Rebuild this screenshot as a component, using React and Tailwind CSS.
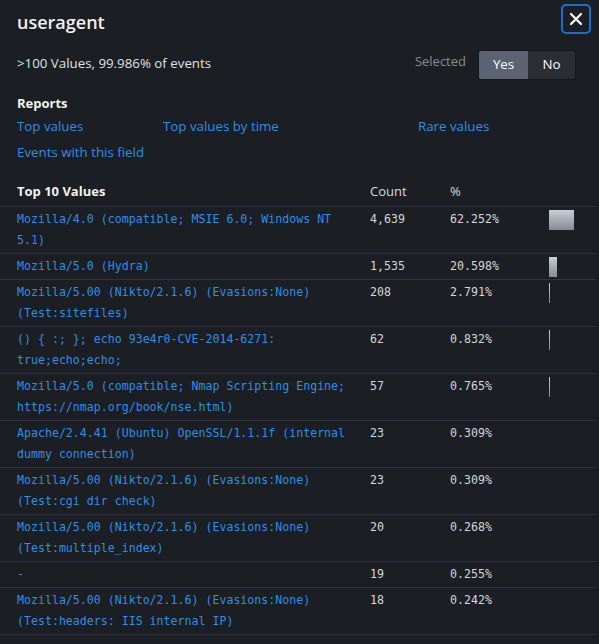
const rows = [
  { value: "Mozilla/4.0 (compatible; MSIE 6.0; Windows NT 5.1)", count: "4,639", pct: 62.252 },
  { value: "Mozilla/5.0 (Hydra)", count: "1,535", pct: 20.598 },
  { value: "Mozilla/5.00 (Nikto/2.1.6) (Evasions:None) (Test:sitefiles)", count: "208", pct: 2.791 },
  { value: "() { :; }; echo 93e4r0-CVE-2014-6271: true;echo;echo;", count: "62", pct: 0.832 },
  { value: "Mozilla/5.0 (compatible; Nmap Scripting Engine; https://nmap.org/book/nse.html)", count: "57", pct: 0.765 },
  { value: "Apache/2.4.41 (Ubuntu) OpenSSL/1.1.1f (internal dummy connection)", count: "23", pct: 0.309 },
  { value: "Mozilla/5.00 (Nikto/2.1.6) (Evasions:None) (Test:cgi dir check)", count: "23", pct: 0.309 },
  { value: "Mozilla/5.00 (Nikto/2.1.6) (Evasions:None) (Test:multiple_index)", count: "20", pct: 0.268 },
  { value: "-", count: "19", pct: 0.255 },
  { value: "Mozilla/5.00 (Nikto/2.1.6) (Evasions:None) (Test:headers: IIS internal IP)", count: "18", pct: 0.242 },
];

const sans = { fontFamily: '"Open Sans", "Liberation Sans", sans-serif' };
const mono = { fontFamily: '"DejaVu Sans Mono", "Liberation Mono", monospace' };

export default function App() {
  return (
    <div className="w-[599px] h-[644px] overflow-hidden bg-[#1b1e22] text-[#e3e6ea]" style={sans}>
      {/* header */}
      <div className="flex justify-between pl-[17px] pr-[8px] pt-[4px]">
        <div className="mt-[3px] h-[30px] text-[18px] font-semibold leading-[30px] text-[#eef0f3]">useragent</div>
        <button className="flex h-[30px] w-[30px] items-center justify-center rounded-[5px] border-2 border-[#1c6dd0] text-white">
          <svg width="14" height="14" viewBox="0 0 14 14" fill="none" stroke="currentColor" strokeWidth="2.2" strokeLinecap="round">
            <path d="M2 2l10 10M12 2L2 12" />
          </svg>
        </button>
      </div>

      {/* stats + selected */}
      <div className="mt-[13px] flex h-[30px] items-start pl-[17px] pr-[23px]">
        <div className="text-[13.3px] leading-[26px] text-[#dfe2e6]">&gt;100 Values, 99.986% of events</div>
        <div className="ml-auto mr-[12px] text-[13px] leading-[22px] text-[#878d96]">Selected</div>
        <div className="flex h-[30px] overflow-hidden rounded-[3px] border border-[#15171a] text-[13.3px]">
          <div className="flex w-[49px] items-center justify-center bg-[#5b6372] text-white">Yes</div>
          <div className="flex w-[47px] items-center justify-center bg-[#2a2e33] text-white">No</div>
        </div>
      </div>

      {/* reports */}
      <div className="mt-[13px] pl-[17px] text-[13px] font-bold leading-[20px] text-[#f0f2f4]">Reports</div>
      <div className="grid grid-cols-[146px_255px_1fr] pl-[17px] text-[13.3px] leading-[26px] text-[#2f8ee8]">
        <span>Top values</span>
        <span>Top values by time</span>
        <span>Rare values</span>
        <span className="col-span-3">Events with this field</span>
      </div>

      {/* table */}
      <div className="mt-[16px] w-[596px]">
        <div className="grid grid-cols-[353px_80px_99px_1fr] border-b border-[#30353b] pb-[5px] pl-[17px] text-[13px] leading-[20px]">
          <span className="font-bold text-[#f0f2f4]">Top 10 Values</span>
          <span className="text-[#d6d9dd]">Count</span>
          <span className="text-[#d6d9dd]">%</span>
          <span />
        </div>
        {rows.map((r, i) => {
          const w = Math.max(1, Math.round((r.pct / 100) * 40));
          return (
            <div
              key={i}
              className="grid grid-cols-[353px_80px_99px_1fr] border-b border-[#30353b] py-[2px] pl-[17px] text-[11.6px] leading-[21px]"
              style={mono}
            >
              <span className="pr-[12px] text-[#2f8ee8]">{r.value}</span>
              <span className="text-[#d3d6db]">{r.count}</span>
              <span className="text-[#d3d6db]">{r.pct.toFixed(3)}%</span>
              <div className="pt-[1px]">
                {r.pct > 0.5 && (
                  <div
                    className="h-[20px] bg-gradient-to-b from-[#c9ced6] to-[#858c98]"
                    style={{ width: w }}
                  />
                )}
              </div>
            </div>
          );
        })}
      </div>
    </div>
  );
}
